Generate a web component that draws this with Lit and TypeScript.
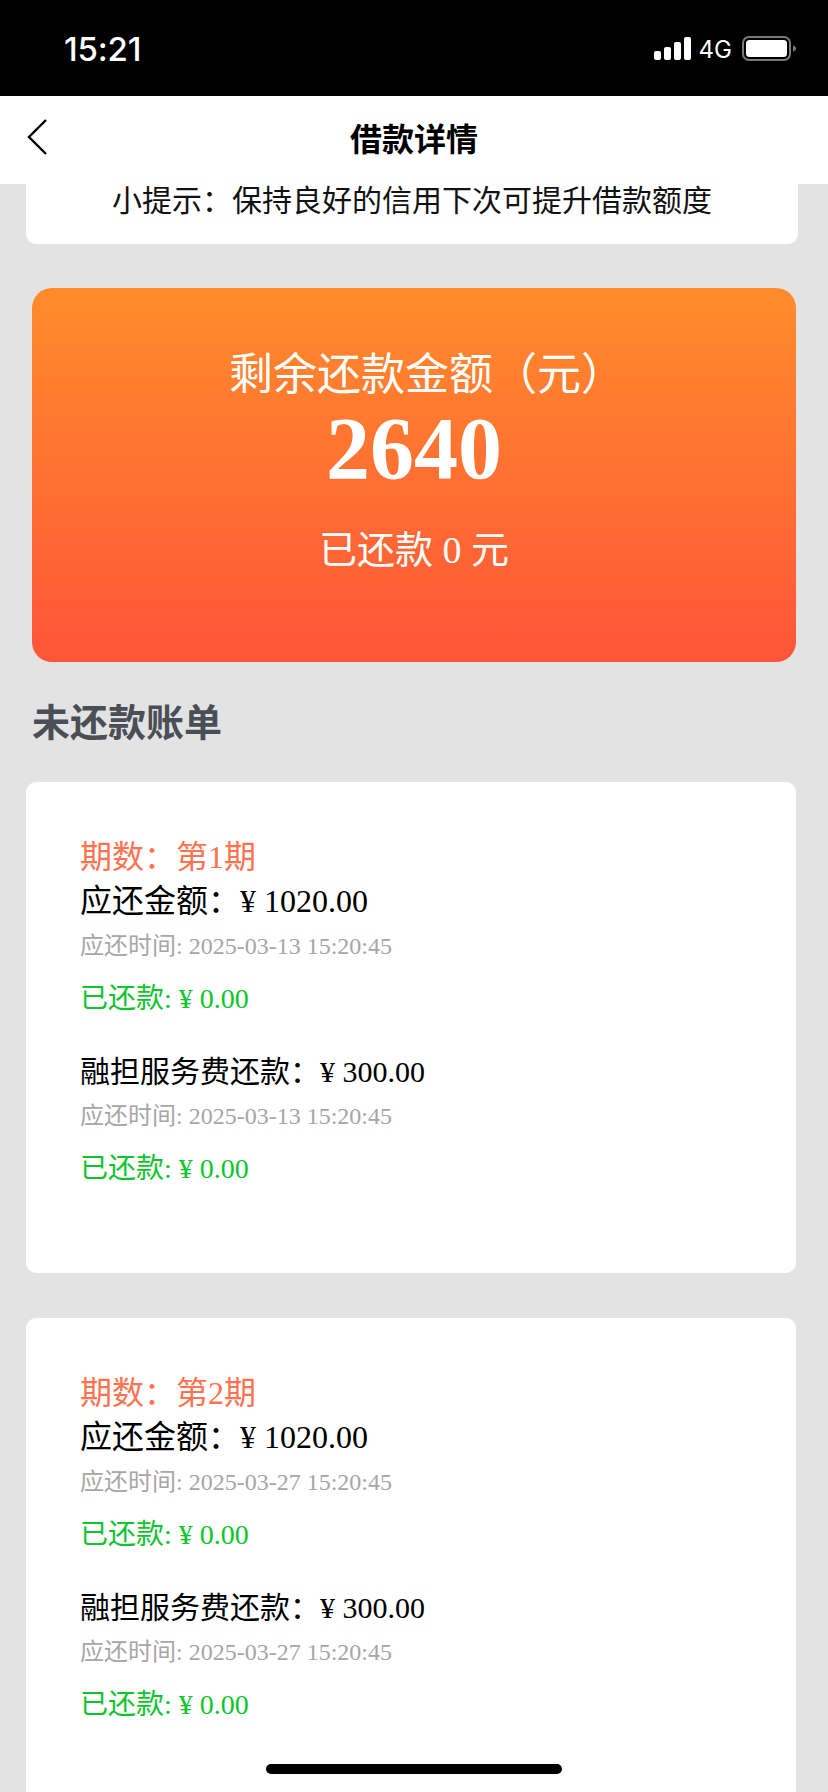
import { LitElement, html, css } from "lit";
import { customElement } from "lit/decorators.js";

interface Period { no: number; date: string; }
const periods: Period[] = [
  { no: 1, date: "2025-03-13 15:20:45" },
  { no: 2, date: "2025-03-27 15:20:45" },
];

@customElement("app-root")
export class AppRoot extends LitElement {
  static styles = css`
    :host {
      display: block;
      position: relative;
      width: 828px;
      height: 1792px;
      overflow: hidden;
      background: #e3e3e3;
      font-family: "Liberation Serif", "Noto Sans CJK SC", serif;
      color: #000;
    }
    .status {
      height: 96px;
      background: #000;
      color: #fff;
      display: flex;
      align-items: center;
      justify-content: space-between;
      padding: 2px 32px 0 64px;
      box-sizing: border-box;
      font-family: "Inter", "Liberation Sans", sans-serif;
    }
    .time { font-size: 33px; font-weight: 500; letter-spacing: -0.2px; }
    .status-right { display: flex; align-items: center; gap: 8px; }
    .net { font-size: 24px; font-weight: 400; color: #fff; margin-right: 2px; }
    .header {
      height: 88px;
      box-sizing: border-box;
      padding-bottom: 7px;
      background: #fff;
      display: flex;
      align-items: center;
      justify-content: center;
      position: relative;
      font-family: "Noto Sans CJK SC", sans-serif;
      font-size: 32px;
      font-weight: 700;
    }
    .back { position: absolute; left: 26px; top: 22px; }
    .tip {
      height: 60px;
      margin: 0 30px 0 26px;
      background: #fff;
      border-radius: 0 0 10px 10px;
      text-align: center;
      font-family: "Noto Sans CJK SC", sans-serif;
      font-size: 30px;
      line-height: 28px;
      color: #111;
    }
    .hero {
      margin: 44px 32px 0;
      height: 374px;
      border-radius: 20px;
      background: linear-gradient(180deg, #ff8c2b 0%, #ff5539 100%);
      color: #fff;
      display: flex;
      flex-direction: column;
      align-items: center;
      text-align: center;
    }
    .hero-title { margin-top: 63px; padding-left: 26px; font-size: 44px; line-height: 50px; white-space: pre; }
    .hero-num { margin-top: 3px; font-size: 88px; font-weight: 700; line-height: 90px; }
    .hero-paid { margin-top: 31px; font-size: 38px; line-height: 50px; }
    .section {
      height: 120px;
      box-sizing: border-box;
      padding: 0 0 5px 32px;
      display: flex;
      align-items: center;
      font-family: "Noto Sans CJK SC", sans-serif;
      font-size: 38px;
      font-weight: 600;
      color: #4a4f56;
    }
    .card {
      margin: 0 32px 45px 26px;
      height: 491px;
      box-sizing: border-box;
      padding: 53px 54px 0;
      background: #fff;
      border-radius: 10px;
    }
    .line { font-size: 32px; line-height: 44px; white-space: pre; }
    .period { color: #ff7350; }
    .when { font-size: 24px; line-height: 46px; color: #a6a6a6; }
    .paid { font-size: 28px; line-height: 60px; color: #0dc52c; }
    .fee { margin-top: 22px; font-size: 30px; line-height: 42px; }
    .home {
      position: absolute;
      left: 266px;
      top: 1764px;
      width: 296px;
      height: 10px;
      border-radius: 5px;
      background: #000;
    }
  `;

  private signal() {
    return html`<svg width="38" height="24" viewBox="0 0 38 24" fill="#fff">
      <rect x="1" y="14" width="7" height="9" rx="2"></rect>
      <rect x="11" y="10" width="7" height="13" rx="2"></rect>
      <rect x="21" y="5" width="7" height="18" rx="2"></rect>
      <rect x="31" y="0" width="7" height="23" rx="2"></rect>
    </svg>`;
  }

  private battery() {
    return html`<svg width="54" height="26" viewBox="0 0 54 26">
      <rect x="1" y="1" width="47" height="23" rx="6" fill="none" stroke="#7a7a7a" stroke-width="2"></rect>
      <rect x="4" y="4" width="41" height="17" rx="3.5" fill="#fff"></rect>
      <path d="M51 9.5c2 .6 3 1.8 3 3s-1 2.4-3 3z" fill="#7a7a7a"></path>
    </svg>`;
  }

  private renderCard(p: Period) {
    return html`<div class="card">
      <div class="line period">期数：第${p.no}期</div>
      <div class="line">应还金额：¥ 1020.00</div>
      <div class="when">应还时间: ${p.date}</div>
      <div class="paid">已还款: ¥ 0.00</div>
      <div class="line fee">融担服务费还款：¥ 300.00</div>
      <div class="when">应还时间: ${p.date}</div>
      <div class="paid">已还款: ¥ 0.00</div>
    </div>`;
  }

  render() {
    return html`
      <div class="status">
        <span class="time">15:21</span>
        <div class="status-right">
          ${this.signal()}<span class="net">4G</span>${this.battery()}
        </div>
      </div>
      <div class="header">
        <svg class="back" width="24" height="38" viewBox="0 0 24 38" fill="none" stroke="#000" stroke-width="2.4">
          <path d="M20 2 3 19l17 17"></path>
        </svg>
        借款详情
      </div>
      <div class="tip">小提示：保持良好的信用下次可提升借款额度</div>
      <div class="hero">
        <div class="hero-title">剩余还款金额（元）</div>
        <div class="hero-num">2640</div>
        <div class="hero-paid">已还款 0 元</div>
      </div>
      <div class="section">未还款账单</div>
      ${periods.map((p) => this.renderCard(p))}
      <div class="home"></div>
    `;
  }
}
